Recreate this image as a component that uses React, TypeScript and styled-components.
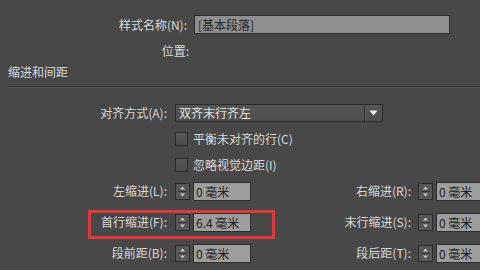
import React from 'react';
import styled, { createGlobalStyle } from 'styled-components';

const GlobalStyle = createGlobalStyle`
  html, body {
    margin: 0;
    background: #484848;
  }
  body {
    font-family: "Noto Sans CJK SC", "Noto Sans", sans-serif;
    font-size: 12px;
    color: #d8d8d8;
    overflow: hidden;
  }
`;

const Page = styled.div`
  width: 480px;
  height: 270px;
  padding-top: 15px;
  box-sizing: border-box;
  overflow: hidden;
`;

const TopRow = styled.div<{ $gap?: number }>`
  display: flex;
  align-items: center;
  height: 19px;
  margin-top: ${({ $gap }) => $gap ?? 0}px;
`;

const Label = styled.div<{ $width: number }>`
  width: ${({ $width }) => $width}px;
  flex: none;
  text-align: right;
  white-space: nowrap;
  line-height: 18px;
`;

const NameInput = styled.div`
  margin-left: 7px;
  width: 251px;
  height: 17px;
  background: #8f8f8f;
  border: 1px solid #2e2e2e;
  color: #262626;
  line-height: 17px;
  padding-left: 3px;
  box-sizing: content-box;
`;

const SectionHeader = styled.div`
  margin: 3px 0 0 8px;
  padding-bottom: 6px;
  line-height: 17px;
  border-bottom: 1px solid #333333;
  box-shadow: 0 1px 0 #535353;
`;

const Form = styled.div`
  margin-top: 17px;
  display: flex;
  flex-direction: column;
  gap: 8px;
`;

const Row = styled.div`
  display: flex;
  align-items: center;
  height: 18px;
`;

const Select = styled.div`
  margin-left: 8px;
  width: 206px;
  height: 16px;
  display: flex;
  align-items: stretch;
  background: linear-gradient(#555555, #4e4e4e);
  border: 1px solid #2b2b2b;
  color: #e2e2e2;
`;

const SelectText = styled.div`
  flex: 1;
  padding-left: 3px;
  line-height: 16px;
`;

const SelectButton = styled.div`
  width: 17px;
  border-left: 1px solid #2f2f2f;
  box-shadow: inset 1px 0 0 #5e5e5e;
  display: flex;
  align-items: center;
  justify-content: center;
`;

const Check = styled.div`
  margin-left: 8px;
  width: 11px;
  height: 12px;
  border: 1px solid #2a2a2a;
  background: linear-gradient(#585858, #4a4a4a);
`;

const CheckText = styled.span`
  margin-left: 5px;
  line-height: 18px;
`;

const NumberGroup = styled.div`
  display: flex;
  flex-direction: column;
  gap: 13px;
`;

const Field = styled.div<{ $width?: number }>`
  display: flex;
  align-items: center;
  height: 18px;
  width: ${({ $width }) => ($width ? `${$width}px` : 'auto')};
  flex: ${({ $width }) => ($width ? 'none' : '1')};
`;

const Spinner = styled.div<{ $gap: number }>`
  margin-left: ${({ $gap }) => $gap}px;
  width: 13px;
  height: 15px;
  border: 1px solid #2c2c2c;
  background: #575757;
  flex: none;
  display: flex;
`;

const NumberInput = styled.div`
  margin-left: 3px;
  width: 54px;
  height: 17px;
  border: 1px solid #2e2e2e;
  background: #9d9d9d;
  color: #1e1e1e;
  line-height: 17px;
  padding-left: 2px;
  flex: none;
  white-space: nowrap;
`;

const Highlight = styled.div`
  position: relative;
  &::after {
    content: '';
    position: absolute;
    left: 88px;
    top: -3px;
    width: 181px;
    height: 23px;
    border: 3px solid #dd3a3f;
    pointer-events: none;
  }
`;

const Arrow = () => (
  <svg width="9" height="6" viewBox="0 0 9 6">
    <path d="M0.5 0.5 L8.5 0.5 L4.5 5.5 Z" fill="#f2f2f2" />
  </svg>
);

const SpinIcon = () => (
  <svg width="13" height="15" viewBox="0 0 13 15">
    <path d="M4 5.5 L9 5.5 L6.5 2.5 Z" fill="#c8c8c8" />
    <line x1="2" y1="7.5" x2="11" y2="7.5" stroke="#3a3a3a" strokeWidth="1" />
    <path d="M4 9.5 L9 9.5 L6.5 12.5 Z" fill="#c8c8c8" />
  </svg>
);

type NumProps = { label: string; value: string; labelWidth: number; gap: number; width?: number };

const NumberField: React.FC<NumProps> = ({ label, value, labelWidth, gap, width }) => (
  <Field $width={width}>
    <Label $width={labelWidth}>{label}</Label>
    <Spinner $gap={gap}>
      <SpinIcon />
    </Spinner>
    <NumberInput>{value}</NumberInput>
  </Field>
);

const rows = [
  { left: '左缩进(L):', leftValue: '0 毫米', right: '右缩进(R):', highlight: false },
  { left: '首行缩进(F):', leftValue: '6.4 毫米', right: '末行缩进(S):', highlight: true },
  { left: '段前距(B):', leftValue: '0 毫米', right: '段后距(T):', highlight: false },
];

export default function App() {
  return (
    <Page>
      <GlobalStyle />
      <TopRow>
        <Label $width={187}>样式名称(N):</Label>
        <NameInput>[基本段落]</NameInput>
      </TopRow>
      <TopRow $gap={7}>
        <Label $width={189}>位置:</Label>
      </TopRow>
      <SectionHeader>缩进和间距</SectionHeader>

      <Form>
        <Row>
          <Label $width={167}>对齐方式(A):</Label>
          <Select>
            <SelectText>双齐末行齐左</SelectText>
            <SelectButton>
              <Arrow />
            </SelectButton>
          </Select>
        </Row>
        <Row>
          <Label $width={167} />
          <Check />
          <CheckText>平衡未对齐的行(C)</CheckText>
        </Row>
        <Row>
          <Label $width={167} />
          <Check />
          <CheckText>忽略视觉边距(I)</CheckText>
        </Row>

        <NumberGroup>
          {rows.map((r) => {
            const left = (
              <NumberField label={r.left} value={r.leftValue} labelWidth={167} gap={8} width={250} />
            );
            return (
              <Row key={r.left}>
                {r.highlight ? <Highlight>{left}</Highlight> : left}
                <NumberField label={r.right} value="0 毫米" labelWidth={161} gap={7} />
              </Row>
            );
          })}
        </NumberGroup>
      </Form>
    </Page>
  );
}
